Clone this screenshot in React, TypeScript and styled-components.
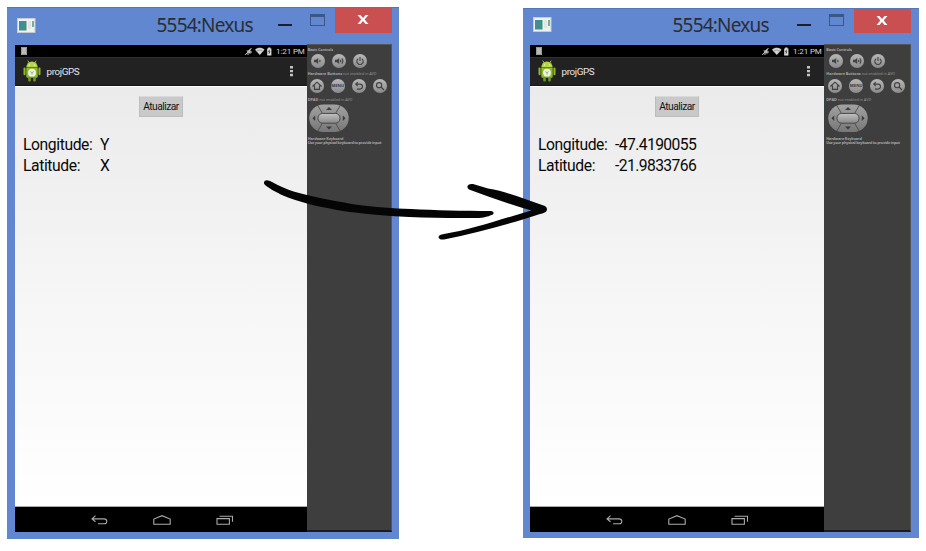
import React from 'react';
import styled, { createGlobalStyle } from 'styled-components';

const GlobalStyle = createGlobalStyle`
  * { box-sizing: border-box; }
  body { margin: 0; background: #fff; overflow: hidden; }
  svg { display: block; flex: none; }
`;

const Page = styled.main`
  position: relative;
  display: flex;
  align-items: flex-start;
  gap: 124px;
  width: 926px;
  height: 551px;
  padding: 7px 0 0 7px;
`;

const WindowFrame = styled.section<{ $width: number; $top: number; $height: number }>`
  display: flex;
  flex: none;
  flex-direction: column;
  width: ${(p) => p.$width}px;
  height: ${(p) => p.$height}px;
  margin-top: ${(p) => p.$top}px;
  background: #6087d0;
  border-top: 1px solid #5377b8;
`;

const TitleBar = styled.header<{ $inset: number; $height: number; $end: number }>`
  display: flex;
  flex: none;
  height: ${(p) => p.$height}px;
  padding: 0 ${(p) => p.$end}px 0 ${(p) => p.$inset}px;
`;

const AppIconSlot = styled.span<{ $top: number }>`
  flex: none;
  margin-top: ${(p) => p.$top}px;
`;

const Title = styled.h1<{ $gap: number; $top: number }>`
  flex: 1;
  margin: ${(p) => p.$top}px 0 0 ${(p) => p.$gap}px;
  font: 400 19px/26px 'Noto Sans', sans-serif;
  letter-spacing: -0.8px;
  color: #2b2d33;
  white-space: nowrap;
`;

const WindowButtons = styled.div`
  display: flex;
  flex: none;
  align-items: flex-start;
`;

const Minimize = styled.span<{ $top: number }>`
  width: 14px;
  height: 2px;
  margin: ${(p) => p.$top}px 18px 0 0;
  background: #1d2026;
`;

const Maximize = styled.span<{ $top: number }>`
  width: 15px;
  height: 12px;
  margin: ${(p) => p.$top}px 10px 0 0;
  border: 1px solid #3d5685;
  border-top-width: 3px;
`;

const Close = styled.span<{ $top: number }>`
  display: flex;
  align-items: center;
  justify-content: center;
  width: 57px;
  height: ${(p) => 25 - p.$top}px;
  padding: 0 1px 2px 0;
  background: #c94f50;
`;

const WindowBody = styled.div<{ $inset: number }>`
  display: flex;
  align-items: flex-start;
  padding-left: ${(p) => p.$inset}px;
`;

const Device = styled.div<{ $width: number }>`
  display: flex;
  flex-direction: column;
  flex: none;
  width: ${(p) => p.$width}px;
  height: 487px;
  margin-top: 1px;
  font-family: Roboto, sans-serif;
  background: #000;
`;

const StatusBar = styled.div`
  display: flex;
  align-items: center;
  height: 12px;
  padding: 0 3px 0 6px;
  color: #d4d4d4;
  font-size: 8px;
  line-height: 12px;
  letter-spacing: -0.1px;
`;

const Notification = styled.span`
  width: 6px;
  height: 8px;
  margin-right: auto;
  background: #b9b9b9;
  border: 1px solid #999;
`;

const Clock = styled.span`
  width: 28px;
  margin-left: 3px;
  margin-top: 1px;
  white-space: nowrap;
`;

const ActionBar = styled.div`
  display: flex;
  align-items: center;
  height: 29px;
  padding: 0 13px 0 8px;
  background: #222;
  border-top: 1px solid #303030;
  border-bottom: 1px solid #151515;
  color: #e6e6e6;
  font-size: 9.9px;
`;

const AppName = styled.span`
  flex: 1;
  margin: 1px 0 0 5.5px;
  letter-spacing: -0.4px;
`;

const Content = styled.div`
  height: 422px;
  padding: 9px 8px 0;
  border-top: 1px solid #fff;
  border-bottom: 1px solid #aaa;
  background: linear-gradient(#ebebeb, #f6f6f6 50%, #fff);
`;

const UpdateButton = styled.button`
  display: block;
  width: 44px;
  height: 21px;
  margin: 0 auto;
  padding: 0;
  border: 1px solid #bdbdbd;
  border-top-color: #d9d9d9;
  background: #c9c9c9;
  color: #111;
  font: 10.2px/19px Roboto, sans-serif;
  letter-spacing: -0.5px;
`;

const Coordinates = styled.dl`
  display: grid;
  grid-template-columns: 77px 1fr;
  grid-auto-rows: 21px;
  margin: 18.5px 0 0;
  color: #080808;
  font-size: 15.7px;
  line-height: 20px;
  white-space: nowrap;
`;

const Label = styled.dt`
  letter-spacing: -0.4px;
`;

const Value = styled.dd`
  margin: 0;
  letter-spacing: -0.6px;
`;

const NavBar = styled.div`
  display: flex;
  align-items: center;
  height: 25px;
  padding-left: 76px;
  gap: 45px;
`;

const ControlsPanel = styled.aside<{ $width: number; $inset: number }>`
  width: ${(p) => p.$width}px;
  height: 488px;
  padding: 3px 0 0 ${(p) => p.$inset}px;
  background: #3e3e3e;
  border: 0 solid #555;
  border-top-width: 1px;
  border-right-width: 1px;
  border-bottom: 2px solid #1c1c20;
  color: #999;
  font: 3.8px/4px 'Open Sans', sans-serif;
  white-space: nowrap;
`;

const Caption = styled.p<{ $tracking?: number }>`
  height: 4px;
  margin: 0;
  letter-spacing: ${(p) => p.$tracking ?? 0}px;

  b { color: #a8a8a8; }
`;

const ButtonRow = styled.div<{ $before: number; $after: number; $inset: number }>`
  display: flex;
  gap: 7px;
  margin: ${(p) => p.$before}px 0 ${(p) => p.$after}px ${(p) => p.$inset}px;
`;

const HardKey = styled.span`
  display: flex;
  flex: none;
  align-items: center;
  justify-content: center;
  width: 14px;
  height: 14px;
  border-radius: 50%;
  background: linear-gradient(#b8b8b8, #8a8a8a);
  color: #3a3a3a;
  font: 700 4.2px/14px 'Open Sans', sans-serif;
`;

const PadSlot = styled.div`
  margin: 2px 0 4px 1.5px;
`;

const ArrowOverlay = styled.svg`
  position: absolute;
  inset: 0;
  pointer-events: none;
`;

const ProgramIcon = () => (
  <svg width="19" height="15" viewBox="0 0 19 15">
    <rect x=".5" y=".5" width="17.5" height="14" fill="#f1f1ef" stroke="#c5cbd5" />
    <rect x="2" y="3" width="7.5" height="9.5" fill="#3c9283" />
    <path d="M2 3h4v9H2z" fill="#4687a8" opacity=".55" />
    <path d="M11 4h3M11 6h3M11 8h3M11 10h3" stroke="#d5d7d8" />
    <path d="M16 3v6" stroke="#43a177" strokeWidth="1.5" />
  </svg>
);

const CloseGlyph = () => (
  <svg width="12" height="9" viewBox="0 0 12 9">
    <path d="M.5 0h3L6 3l2.5-3h3L7.7 4.5 11.5 9h-3L6 6 3.5 9h-3l3.8-4.500z" fill="#fff" />
  </svg>
);

const StatusIcons = () => (
  <svg width="29" height="9" viewBox="0 0 29 9">
    <path d="M2.200 3.500h2L6.500 1.500v5.500L4.500 6z" fill="#bbb" />
    <path d="M1.200 8L7.500 1M6 5h2M4 6v2" fill="none" stroke="#c9c9c9" strokeWidth="1" />
    <path d="M11 2.7C14 .2 17.7.2 20.5 2.7L15.8 8z" fill="#d2d2d2" />
    <path d="M12.7 4q3-2 6 0" fill="none" stroke="#777" strokeWidth=".6" />
    <path d="M23.2 1.5h1V.5h2.2v1h1v7h-4.2z" fill="#ddd" />
    <path d="M25.7 2.7l-1.2 2h1.4l-1 2" fill="none" stroke="#222" strokeWidth=".8" />
  </svg>
);

const AndroidLogo = () => (
  <svg width="18" height="22" viewBox="0 0 18 22">
    <g stroke="#a4cc35" strokeWidth="1" strokeLinecap="round">
      <path d="M5 1l1.5 2.3M13 1l-1.5 2.3" />
    </g>
    <path d="M3.3 7.4a5.7 5.8 0 0 1 11.4 0z" fill="#b1d743" />
    <path d="M3.3 8h11.4v8.6q0 1.2-1.2 1.2h-9q-1.2 0-1.2-1.2z" fill="#8fb92c" />
    <rect x=".5" y="7.4" width="2.1" height="7.8" rx="1" fill="#8db82a" />
    <rect x="15.4" y="7.4" width="2.1" height="7.8" rx="1" fill="#8db82a" />
    <rect x="5.2" y="17" width="2.6" height="4.5" rx="1" fill="#6f991c" />
    <rect x="10.2" y="17" width="2.6" height="4.5" rx="1" fill="#6f991c" />
    <circle cx="6.5" cy="5" r=".7" fill="#eef5d8" />
    <circle cx="11.5" cy="5" r=".7" fill="#eef5d8" />
    <circle cx="9" cy="12.7" r="3.9" fill="#eef2e4" />
    <path d="M7.3 11.6L9 12.7l1.7-1.1M9 12.7v1.900" fill="none" stroke="#9aae72" />
  </svg>
);

const OverflowMenu = () => (
  <svg width="5" height="12" viewBox="0 0 5 12">
    <path d="M1 1h3v2.4H1zM1 4.9h3v2.4H1zM1 8.8h3v2.4H1z" fill="#c3c3c3" />
  </svg>
);

const navStroke = { fill: 'none', stroke: '#aaa', strokeWidth: 1.1 };

const BackIcon = () => (
  <svg width="17" height="10" viewBox="0 0 17 10">
    <path d="M4.500.7L1 3.900l3.500 2.800M1.200 3.900H13q2.800 0 2.800 2.500T13 8.800H7" {...navStroke} />
  </svg>
);

const HomeIcon = () => (
  <svg width="18" height="10" viewBox="0 0 18 10">
    <path d="M.8 9.2V4L9 .7 17.2 4v5.2z" {...navStroke} />
  </svg>
);

const RecentsIcon = () => (
  <svg width="18" height="10" viewBox="0 0 18 10">
    <path d="M1 3.6h12.4v5.6H1zM3.5 1.2h13v5.6" {...navStroke} />
  </svg>
);

const KeyGlyph = ({ d, solid }: { d: string; solid?: string }) => (
  <svg width="10" height="10" viewBox="0 0 10 10">
    {solid && <path d={solid} fill="#414141" />}
    <path d={d} fill="none" stroke="#414141" strokeWidth="1.1" />
  </svg>
);

const speaker = 'M1 3.7h2L5.2 2v6L3 6.3H1z';

const DirectionPad = () => (
  <svg width="40" height="29" viewBox="0 0 40 29">
    <defs>
      <linearGradient id="pad" x2="0" y2="1">
        <stop stopColor="#a2a2a2" />
        <stop offset="1" stopColor="#777" />
      </linearGradient>
      <linearGradient id="select" x2="0" y2="1">
        <stop stopColor="#c2c2c2" />
        <stop offset="1" stopColor="#888" />
      </linearGradient>
    </defs>
    <rect x=".3" y=".5" width="39.4" height="27.6" rx="14" fill="url(#pad)" />
    <path d="M8.5 1l5 8.5M31.5 1l-5 8.5M8.5 27.5l5-8.5M31.5 27.5l-5-8.5" stroke="#444" strokeWidth=".8" />
    <rect x="9" y="9.4" width="22" height="9.8" rx="4.6" fill="url(#select)" stroke="#484848" strokeWidth="1" />
    <path d="M20 3l3 3h-6zM20 25.5l3-3h-6zM3.5 14.3l2.7-2.8v5.6zM36.5 14.3l-2.7-2.8v5.6z" fill="#3b3b3b" />
  </svg>
);

interface EmulatorProps {
  width: number;
  height: number;
  top: number;
  deviceInset: number;
  deviceWidth: number;
  panelWidth: number;
  panelInset: number;
  iconInset: number;
  buttonsInset: number;
  longitude: string;
  latitude: string;
}

const Emulator = (p: EmulatorProps) => (
  <WindowFrame $width={p.width} $height={p.height} $top={p.top}>
    <TitleBar $inset={p.iconInset} $height={36 - p.top} $end={p.buttonsInset}>
      <AppIconSlot $top={10 - p.top * 2}>
        <ProgramIcon />
      </AppIconSlot>
      <Title $gap={120.5} $top={4 - p.top}>5554:Nexus</Title>
      <WindowButtons>
        <Minimize $top={16 - p.top} />
        <Maximize $top={6 - p.top} />
        <Close $top={p.top}>
          <CloseGlyph />
        </Close>
      </WindowButtons>
    </TitleBar>
    <WindowBody $inset={p.deviceInset}>
      <Device $width={p.deviceWidth}>
        <StatusBar>
          <Notification />
          <StatusIcons />
          <Clock>1:21 PM</Clock>
        </StatusBar>
        <ActionBar>
          <AndroidLogo />
          <AppName>projGPS</AppName>
          <OverflowMenu />
        </ActionBar>
        <Content>
          <UpdateButton>Atualizar</UpdateButton>
          <Coordinates>
            <Label>Longitude:</Label>
            <Value>{p.longitude}</Value>
            <Label>Latitude:</Label>
            <Value>{p.latitude}</Value>
          </Coordinates>
        </Content>
        <NavBar>
          <BackIcon />
          <HomeIcon />
          <RecentsIcon />
        </NavBar>
      </Device>
      <ControlsPanel $width={p.panelWidth} $inset={p.panelInset}>
        <Caption $tracking={-0.1}><b>Basic Controls</b></Caption>
        <ButtonRow $before={2} $after={4} $inset={3}>
          <HardKey><KeyGlyph solid={speaker} d="M6.6 3.8q1 1.2 0 2.4" /></HardKey>
          <HardKey><KeyGlyph solid={speaker} d="M6.3 3.8q1 1.2 0 2.4M7.8 2.4q2.2 2.6 0 5.2" /></HardKey>
          <HardKey><KeyGlyph d="M3.2 2.7a3.2 3.2 0 1 0 3.6 0M5 1v4" /></HardKey>
        </ButtonRow>
        <Caption $tracking={-0.03}><b>Hardware Buttons</b> not enabled in AVD</Caption>
        <ButtonRow $before={3} $after={5} $inset={2}>
          <HardKey><KeyGlyph d="M.9 5L5 1.2 9.1 5H7.5v3.4h-5V5z" /></HardKey>
          <HardKey>MENU</HardKey>
          <HardKey><KeyGlyph d="M3.8 1.2L1.7 3.1l2.1 2M1.9 3.1h4q2.6 0 2.6 2.5T5.9 8.1H3" /></HardKey>
          <HardKey><KeyGlyph d="M6.7 4.2a2.6 2.6 0 1 1-5.2 0a2.6 2.6 0 1 1 5.2 0M6 6l3 3" /></HardKey>
        </ButtonRow>
        <Caption $tracking={-0.03}><b>DPAD</b> not enabled in AVD</Caption>
        <PadSlot><DirectionPad /></PadSlot>
        <Caption $tracking={-0.14}><b>Hardware Keyboard</b></Caption>
        <Caption $tracking={-0.24}><b>Use your physical keyboard to provide input</b></Caption>
      </ControlsPanel>
    </WindowBody>
  </WindowFrame>
);

const BrushArrow = () => (
  <ArrowOverlay width="926" height="551" viewBox="0 0 926 551">
    <path
      d="M264 182Q265 179 270 181C279 186 290 191 303 194C322 199 339 201.5 355 204.500C376 207.500 392 208.300 411 209C435 210.300 462 211 491 211Q495 212 493 214.500C489 216 486 217.500 479 217.900C455 218 432 218 409 217C384 216 361 213.500 343 211C324 207.500 305 204 288 197.500C278 193.500 270 189 265 185Q263.500 183.500 264 182z"
      fill="#050505"
    />
    <path
      d="M467.5 186Q468.500 183.500 473 184L488 188.500C509 192 526 200 545 206Q548 208 546.500 211Q545 213 540 214C511 223.500 477 233 444 239.500Q439 240 438.500 237Q439 234.500 444 234C470 230 502 219 531 210.500C511 205 490 197 469 189.500Q467 188 467.500 186z"
      fill="#050505"
    />
  </ArrowOverlay>
);

export default function App() {
  return (
    <>
      <GlobalStyle />
      <Page>
        <Emulator
          width={392}
          height={532}
          top={0}
          deviceInset={8}
          deviceWidth={292}
          panelWidth={85}
          panelInset={0.7}
          iconInset={10}
          buttonsInset={7}
          longitude="Y"
          latitude="X"
        />
        <Emulator
          width={396}
          height={530}
          top={1}
          deviceInset={7}
          deviceWidth={294}
          panelWidth={87}
          panelInset={2.3}
          iconInset={10}
          buttonsInset={8}
          longitude="-47.4190055"
          latitude="-21.9833766"
        />
        <BrushArrow />
      </Page>
    </>
  );
}
